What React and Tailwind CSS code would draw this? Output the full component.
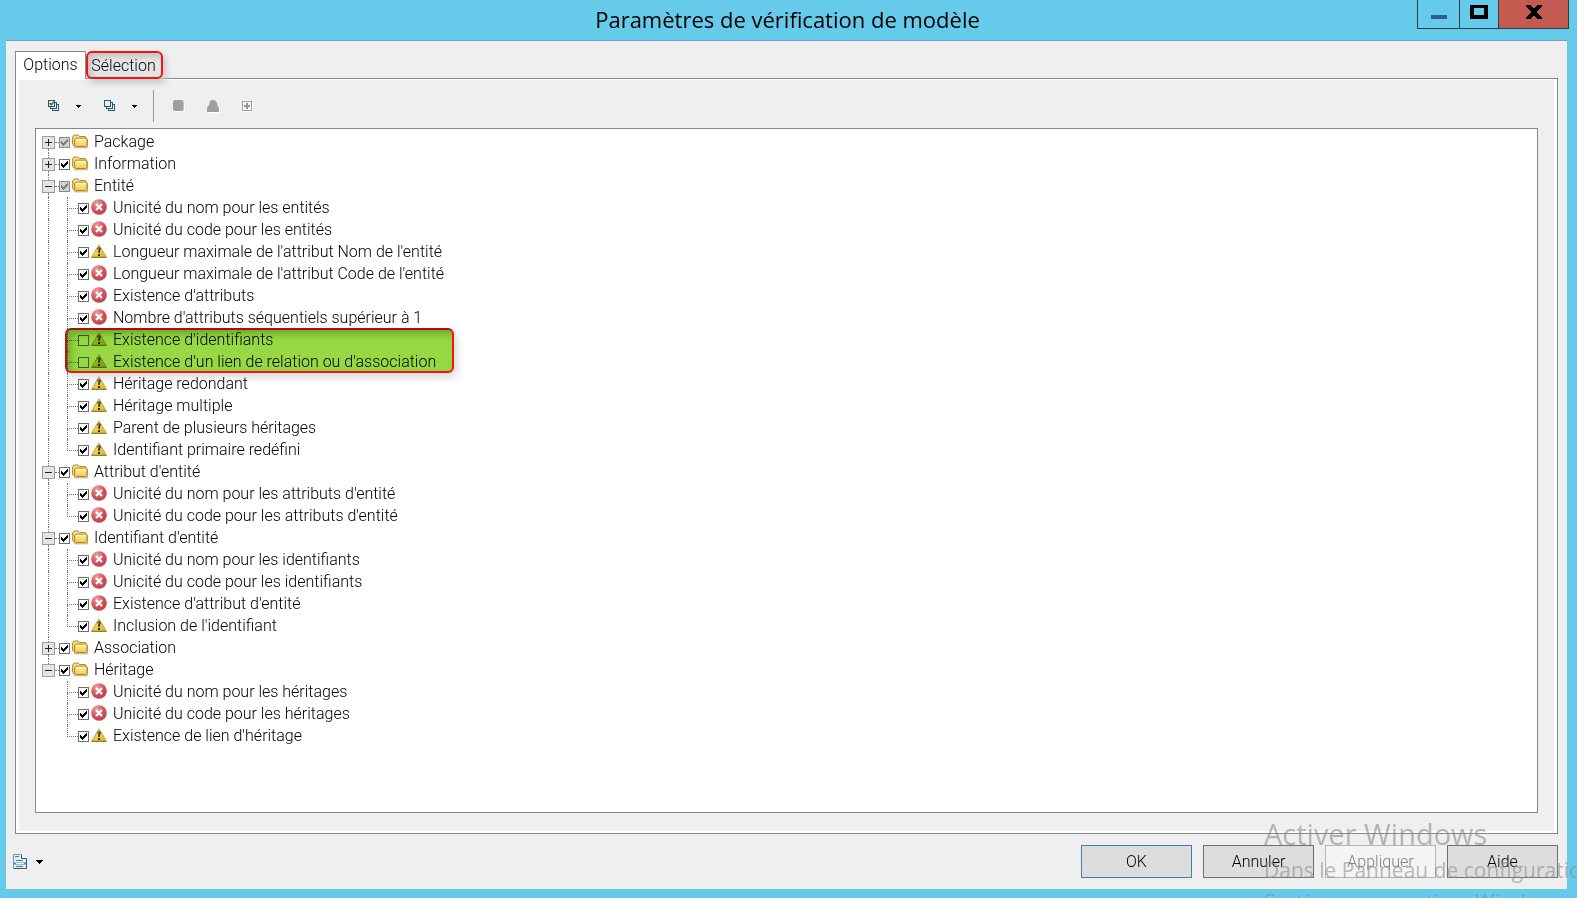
const GROUPS = [
  { label: "Package", open: false, partial: true, items: [] },
  { label: "Information", open: false, items: [] },
  {
    label: "Entité",
    open: true,
    partial: true,
    items: [
      { label: "Unicité du nom pour les entités", kind: "error", checked: true },
      { label: "Unicité du code pour les entités", kind: "error", checked: true },
      { label: "Longueur maximale de l'attribut Nom de l'entité", kind: "warning", checked: true },
      { label: "Longueur maximale de l'attribut Code de l'entité", kind: "error", checked: true },
      { label: "Existence d'attributs", kind: "error", checked: true },
      { label: "Nombre d'attributs séquentiels supérieur à 1", kind: "error", checked: true },
      { label: "Existence d'identifiants", kind: "warning", checked: false, marked: true },
      { label: "Existence d'un lien de relation ou d'association", kind: "warning", checked: false },
      { label: "Héritage redondant", kind: "warning", checked: true },
      { label: "Héritage multiple", kind: "warning", checked: true },
      { label: "Parent de plusieurs héritages", kind: "warning", checked: true },
      { label: "Identifiant primaire redéfini", kind: "warning", checked: true },
    ],
  },
  {
    label: "Attribut d'entité",
    open: true,
    items: [
      { label: "Unicité du nom pour les attributs d'entité", kind: "error", checked: true },
      { label: "Unicité du code pour les attributs d'entité", kind: "error", checked: true },
    ],
  },
  {
    label: "Identifiant d'entité",
    open: true,
    items: [
      { label: "Unicité du nom pour les identifiants", kind: "error", checked: true },
      { label: "Unicité du code pour les identifiants", kind: "error", checked: true },
      { label: "Existence d'attribut d'entité", kind: "error", checked: true },
      { label: "Inclusion de l'identifiant", kind: "warning", checked: true },
    ],
  },
  { label: "Association", open: false, items: [] },
  {
    label: "Héritage",
    open: true,
    items: [
      { label: "Unicité du nom pour les héritages", kind: "error", checked: true },
      { label: "Unicité du code pour les héritages", kind: "error", checked: true },
      { label: "Existence de lien d'héritage", kind: "warning", checked: true },
    ],
  },
];

function FolderIcon() {
  return (
    <svg width="16" height="16" viewBox="0 0 16 16" className="mb-[2px] shrink-0" aria-hidden="true">
      <defs>
        <linearGradient id="folder" x1="0" y1="0" x2="0" y2="1">
          <stop offset="0" stopColor="#fff5a8" />
          <stop offset="1" stopColor="#f2cb45" />
        </linearGradient>
      </defs>
      <path d="M2 14.8h13.4V6" fill="none" stroke="#8c7440" strokeOpacity=".6" />
      <path d="M.6 11.5V4l1.6-2h4l1.4 1.5h5.8l.8 1v2" fill="#f7dd83" stroke="#b98a22" />
      <path d="M3.6 5.2h10.5l.9.9v6.5l-1 1H3.9L2.7 12.4V6.2z" fill="url(#folder)" stroke="#a87a18" />
      <path d="M.6 11.5l2.6 2.1" stroke="#a87a18" />
      <path d="M4 6.3h9.8" stroke="#fffbd8" />
    </svg>
  );
}

function ErrorIcon() {
  return (
    <svg width="16" height="16" viewBox="0 0 16 16" className="mb-[2px] shrink-0" aria-hidden="true">
      <defs>
        <radialGradient id="err" cx=".35" cy=".25" r=".85">
          <stop offset="0" stopColor="#eba3a3" />
          <stop offset=".5" stopColor="#d4555c" />
          <stop offset="1" stopColor="#b93c46" />
        </radialGradient>
      </defs>
      <circle cx="8" cy="8" r="7.8" fill="url(#err)" />
      <path d="M5 5l6 6M11 5l-6 6" stroke="#fff" strokeWidth="2.2" />
    </svg>
  );
}

function WarningIcon() {
  return (
    <svg width="16" height="16" viewBox="0 0 16 16" className="mb-[2px] shrink-0" aria-hidden="true">
      <defs>
        <linearGradient id="warn" x1="0" y1="0" x2="1" y2="1">
          <stop offset="0" stopColor="#fff27a" />
          <stop offset="1" stopColor="#d9b31c" />
        </linearGradient>
      </defs>
      <path d="M8 1.8L15.3 14H.7z" fill="url(#warn)" stroke="#c4a63a" strokeLinejoin="round" />
      <path d="M.5 14.4h15" stroke="#8a7422" />
      <path d="M6.1 5Q8 3.4 9.9 5L9.2 7.6 8.7 10H7.4L7 7.6z" fill="#3a3a3a" />
      <path d="M7.5 5v2.5" stroke="#999" strokeWidth=".8" />
      <rect x="7" y="11" width="2" height="2" fill="#2b2b2b" />
    </svg>
  );
}

function Tick({ id, checked, partial }) {
  return (
    <span className="grid shrink-0">
      <input
        id={id}
        type="checkbox"
        defaultChecked={checked}
        className={
          "peer col-start-1 row-start-1 size-[11px] appearance-none border " +
          (partial ? "border-[#8a8a8a] bg-[#d2d2d2]" : "border-[#6e6e6e] bg-white")
        }
      />
      <svg
        viewBox="0 0 11 11"
        className="pointer-events-none invisible col-start-1 row-start-1 size-[11px] peer-checked:visible"
        shapeRendering="crispEdges"
        aria-hidden="true"
      >
        <path
          d="M2 4h1v1h1v1h1v-1h1v-1h1v-1h1v-1h1v3h-1v1h-1v1h-1v1h-1v1h-1v-1h-1v-1h-1z"
          fill={partial ? "#7d7d7d" : "#000"}
        />
      </svg>
    </span>
  );
}

function Expander({ open, label }) {
  return (
    <button
      type="button"
      aria-label={label}
      aria-expanded={open}
      className="grid size-[13px] shrink-0 place-items-center border border-[#9d9d9d] bg-[#e4e4e4]"
    >
      <svg width="7" height="7" viewBox="0 0 7 7" shapeRendering="crispEdges" aria-hidden="true">
        <path d={open ? "M0 3h7v1H0z" : "M0 3h3V0h1v3h3v1H4v3H3V4H0z"} fill="#222" />
      </svg>
    </button>
  );
}

function GroupRow({ group, first, last, id }) {
  return (
    <div className="flex h-[22px] items-center pl-[6px]">
      <span className="flex w-[13px] flex-col self-stretch">
        <span className={"ml-[6px] flex-1 border-l border-dotted " + (first ? "border-transparent" : "border-[#777]")} />
        <Expander open={group.open} label={group.label} />
        <span className={"ml-[6px] flex-1 border-l border-dotted " + (last ? "border-transparent" : "border-[#777]")} />
      </span>
      <span className="w-1 border-t border-dotted border-[#777]" />
      <Tick id={id} checked partial={group.partial} />
      <label htmlFor={id} className="flex items-center gap-[6px] pl-[2px] whitespace-nowrap">
        <FolderIcon />
        {group.label}
      </label>
    </div>
  );
}

function ItemRow({ item, last, lastGroup, id }) {
  return (
    <li className="relative flex h-[22px] items-center">
      <span className="w-3" />
      <span className={"w-[19px] self-stretch border-l border-dotted " + (lastGroup ? "border-transparent" : "border-[#777]")} />
      <span className="flex w-[11px] flex-col self-stretch">
        <span className="h-3 border-b border-l border-dotted border-[#777]" />
        <span className={"flex-1 border-l border-dotted " + (last ? "border-transparent" : "border-[#777]")} />
      </span>
      <Tick id={id} checked={item.checked} />
      <label htmlFor={id} className="flex items-center gap-[6px] pl-[2px] whitespace-nowrap">
        {item.kind === "error" ? <ErrorIcon /> : <WarningIcon />}
        {item.label}
      </label>
      {item.marked && (
        <span className="pointer-events-none absolute -top-px left-[29px] z-10 h-[45px] w-[389px] rounded-md border-2 border-t-[#a80f0f] border-r-[#f01414] border-b-[#f01414] border-l-[#c01010] bg-[#97d844] shadow-[inset_4px_4px_7px_#6fa82c,3px_4px_8px_#d8d8d8] mix-blend-multiply" />
      )}
    </li>
  );
}

function Caret({ small }) {
  return small ? (
    <svg width="5" height="3" viewBox="0 0 5 3" shapeRendering="crispEdges" aria-hidden="true">
      <path d="M0 0h5v1H4v1H3v1H2V2H1V1H0z" fill="#000" />
    </svg>
  ) : (
    <svg width="7" height="4" viewBox="0 0 7 4" shapeRendering="crispEdges" aria-hidden="true">
      <path d="M0 0h7v1H6v1H5v1H4v1H3V3H2V2H1V1H0z" fill="#000" />
    </svg>
  );
}

function StackIcon({ ticked }) {
  return (
    <svg width="12" height="12" viewBox="0 0 12 12" aria-hidden="true">
      <g fill="#f0f0f0" stroke="#235a80">
        <rect x="4.5" y="4.5" width="6" height="6" />
        <rect x="2.5" y="2.5" width="6" height="6" />
        <rect x=".5" y=".5" width="6" height="6" />
      </g>
      {ticked && <path d="M1.6 3l1.6 1.8L6 1.8" fill="none" stroke="#4f7a0c" strokeWidth="1.6" />}
    </svg>
  );
}

function Toolbar() {
  return (
    <div className="flex h-12 items-center pt-1 pl-[29px]">
      <button type="button" aria-label="Tout sélectionner" className="flex items-center gap-4">
        <StackIcon ticked />
        <Caret small />
      </button>
      <button type="button" aria-label="Tout désélectionner" className="ml-[23px] flex items-center gap-4">
        <StackIcon />
        <Caret small />
      </button>
      <span className="ml-4 h-8 w-px bg-[#9a9a9a]" />
      <button type="button" disabled aria-label="Erreur" className="ml-[19px]">
        <svg width="12" height="12" viewBox="0 0 12 12" aria-hidden="true">
          <path d="M2 11.5h8l1.5-1.5V3" fill="none" stroke="#fff" />
          <path d="M1.5 0H9l1 .5.5 1V9.500L9.500 11H1.500L0 9.500v-8z" fill="#a0a0a0" />
        </svg>
      </button>
      <button type="button" disabled aria-label="Avertissement" className="ml-[22px]">
        <svg width="13" height="13" viewBox="0 0 13 13" aria-hidden="true">
          <path d="M1 12.5h11.5V8" fill="none" stroke="#fff" />
          <path d="M4.500 0h3l2.500 2.500v2l2 3.500v4H0V8l2.500-4V2z" fill="#a0a0a0" />
        </svg>
      </button>
      <button type="button" disabled aria-label="Développer" className="ml-[22px]">
        <svg width="11" height="11" viewBox="0 0 11 11" aria-hidden="true">
          <path d="M.5 10.5h10V.5" fill="none" stroke="#fff" />
          <rect x=".5" y=".5" width="9" height="9" fill="#f8f8f8" stroke="#a0a0a0" />
          <path d="M2 5h6M5 2v6" stroke="#959595" strokeWidth="2" />
        </svg>
      </button>
    </div>
  );
}

function TitleBar() {
  return (
    <header className="-mr-[2px] grid h-10 shrink-0 grid-cols-[1fr_auto_1fr] items-start">
      <h1 className="col-start-2 pt-[3px] font-['Open_Sans',sans-serif] text-[22px] leading-8 font-normal text-black">
        Paramètres de vérification de modèle
      </h1>
      <div className="flex h-[29px] justify-self-end border-x border-b border-[#2f3b42]">
        <button type="button" aria-label="Réduire" className="grid w-[41px] place-items-center pt-[6px]">
          <span className="h-1 w-4 bg-[#2c5f86]" />
        </button>
        <button type="button" aria-label="Agrandir" className="grid w-10 justify-items-center border-x border-[#2f3b42] pt-[5px]">
          <span className="h-[14px] w-[18px] border-4 border-t-3 border-black" />
        </button>
        <button type="button" aria-label="Fermer" className="grid w-[69px] justify-items-center bg-[#c35b50] pt-[5px]">
          <svg width="16" height="14" viewBox="0 0 16 14" shapeRendering="crispEdges" aria-hidden="true">
            <path d="M0 0h5l3 4 3-4h5v1l-5 6 5 6v1h-5l-3-4-3 4H0v-1l5-6-5-6z" fill="#000" />
          </svg>
        </button>
      </div>
    </header>
  );
}

function Footer() {
  const button = "h-[33px] w-[111px] border ";
  return (
    <footer className="flex h-[55px] shrink-0 items-center justify-between pr-[9px] pl-[7px]">
      <button type="button" aria-label="Menu" className="flex items-center gap-[9px]">
        <svg width="14" height="15" viewBox="0 0 14 15" aria-hidden="true">
          <path d="M.5 14.5V.5h8v4h5v10z" fill="#e4edf3" stroke="#6f9bb3" />
          <path d="M8.5 1v3.5h5v10H1" fill="none" stroke="#2c5f7e" />
          <path d="M2 2.5h4M3 6.5h7M3 12.5h7" stroke="#707070" />
          <path d="M1 9.5h12" stroke="#2b9bd8" strokeWidth="2" />
          <path d="M3 9.5h8" stroke="#e8f7ff" />
        </svg>
        <Caret />
      </button>
      <div className="flex gap-[11px]">
        <button type="button" className={button + "border-[#3c7fb1] bg-[#dddddd]"}>OK</button>
        <button type="button" className={button + "border-[#707070] bg-[#dddddd]"}>Annuler</button>
        <button type="button" disabled className={button + "border-[#b4b4b4] bg-[#f4f4f4] text-[#838383]"}>Appliquer</button>
        <button type="button" className={button + "border-[#707070] bg-[#dddddd]"}>Aide</button>
      </div>
    </footer>
  );
}

export default function App() {
  return (
    <div className="relative flex min-h-screen flex-col overflow-hidden bg-[#66caea] pr-[10px] pb-[9px] pl-[6px] font-[Roboto,sans-serif] text-base leading-[22px] font-light text-black">
      <TitleBar />
      <main className="flex flex-1 flex-col border-t border-[#7a9dbb] bg-[#efefef]">
        <div className="flex flex-1 flex-col pt-[10px] pr-[9px] pl-[9px]">
          <div role="tablist" className="flex h-[27px] items-end">
            <button
              type="button"
              role="tab"
              aria-selected="true"
              className="z-10 -mb-px h-7 w-[71px] border border-b-0 border-[#828790] bg-white pb-[2px]"
            >
              Options
            </button>
            <button
              type="button"
              role="tab"
              aria-selected="false"
              className="z-10 -mb-px h-7 w-[77px] rounded-md border-2 border-[#f01414] bg-[#e6e6e6] pt-[2px] pr-[2px] shadow-[inset_3px_3px_6px_#bcbcbc,3px_4px_7px_#c8c8c8]"
            >
              Sélection
            </button>
          </div>
          <section className="flex flex-1 flex-col border border-[#828790] bg-white px-[3px] pt-px pb-[2px]">
            <div className="flex flex-1 flex-col bg-[#efefef] pr-4 pb-[18px] pl-4">
              <div className="-ml-4">
                <Toolbar />
              </div>
              <ul className="flex-1 border border-[#828790] bg-white pt-[2px]">
                {GROUPS.map((group, g) => (
                  <li key={group.label}>
                    <GroupRow group={group} first={g === 0} last={g === GROUPS.length - 1} id={`g${g}`} />
                    {group.open && (
                      <ul>
                        {group.items.map((item, i) => (
                          <ItemRow
                            key={item.label}
                            item={item}
                            last={i === group.items.length - 1}
                            lastGroup={g === GROUPS.length - 1}
                            id={`g${g}i${i}`}
                          />
                        ))}
                      </ul>
                    )}
                  </li>
                ))}
              </ul>
            </div>
          </section>
        </div>
        <Footer />
      </main>
      <div className="pointer-events-none absolute right-0 bottom-0 h-[84px] w-[313px] overflow-hidden font-['Open_Sans',sans-serif] font-normal whitespace-nowrap text-[#8c8c8c]/60">
        <p className="text-[29px] leading-10">Activer Windows</p>
        <p className="text-[21px] leading-8">Dans le Panneau de configuration, sélectionnez</p>
        <p className="text-[21px] leading-8">Système pour activer Windows.</p>
      </div>
    </div>
  );
}
